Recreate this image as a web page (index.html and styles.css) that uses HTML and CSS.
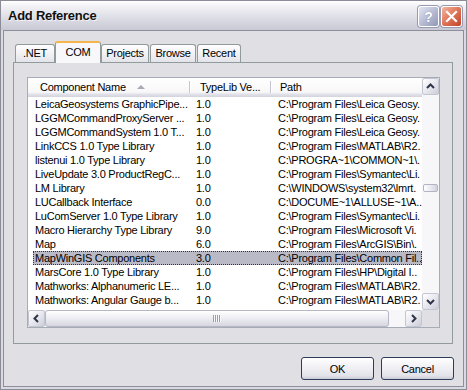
FILE: index.html
```html
<!DOCTYPE html>
<html lang="en">
<head>
    <meta charset="UTF-8">
    <title>Add Reference</title>
    <link rel="stylesheet" href="styles.css">
</head>
<body>
    <div class="window">
        <div class="titlebar">
            <span class="title">Add Reference</span>
            <div class="caption-buttons">
                <span class="cap-btn help">?</span>
                <span class="cap-btn close">
                    <svg width="19" height="19" viewBox="0 0 19 19">
                        <path d="M5 5 L14 14 M14 5 L5 14" stroke="#fff" stroke-width="2.2" stroke-linecap="square"/>
                    </svg>
                </span>
            </div>
        </div>

        <div class="client">
            <div class="tabs">
                <span class="tab tab-net">.NET</span>
                <span class="tab tab-com active">COM</span>
                <span class="tab tab-projects">Projects</span>
                <span class="tab tab-browse">Browse</span>
                <span class="tab tab-recent">Recent</span>
            </div>

            <div class="panel">
                <div class="listview">
                    <div class="lv-main">
                        <div class="lv-header">
                            <div class="hcol c1">Component Name <span class="sort-arrow"></span></div>
                            <div class="hcol c2">TypeLib Ve...</div>
                            <div class="hcol c3">Path</div>
                        </div>
                        <div class="lv-rows">
                            <div class="row"><span class="c1">LeicaGeosystems GraphicPipe...</span><span class="c2">1.0</span><span class="c3">C:\Program Files\Leica Geosy.</span></div>
                            <div class="row"><span class="c1">LGGMCommandProxyServer ...</span><span class="c2">1.0</span><span class="c3">C:\Program Files\Leica Geosy.</span></div>
                            <div class="row"><span class="c1">LGGMCommandSystem 1.0 T...</span><span class="c2">1.0</span><span class="c3">C:\Program Files\Leica Geosy.</span></div>
                            <div class="row"><span class="c1">LinkCCS 1.0 Type Library</span><span class="c2">1.0</span><span class="c3">C:\Program Files\MATLAB\R2.</span></div>
                            <div class="row"><span class="c1">listenui 1.0 Type Library</span><span class="c2">1.0</span><span class="c3">C:\PROGRA~1\COMMON~1\.</span></div>
                            <div class="row"><span class="c1">LiveUpdate 3.0 ProductRegC...</span><span class="c2">1.0</span><span class="c3">C:\Program Files\Symantec\Li.</span></div>
                            <div class="row"><span class="c1">LM Library</span><span class="c2">1.0</span><span class="c3">C:\WINDOWS\system32\lmrt.</span></div>
                            <div class="row"><span class="c1">LUCallback Interface</span><span class="c2">0.0</span><span class="c3">C:\DOCUME~1\ALLUSE~1\A..</span></div>
                            <div class="row"><span class="c1">LuComServer 1.0 Type Library</span><span class="c2">1.0</span><span class="c3">C:\Program Files\Symantec\Li.</span></div>
                            <div class="row"><span class="c1">Macro Hierarchy Type Library</span><span class="c2">9.0</span><span class="c3">C:\Program Files\Microsoft Vi.</span></div>
                            <div class="row"><span class="c1">Map</span><span class="c2">6.0</span><span class="c3">C:\Program Files\ArcGIS\Bin\.</span></div>
                            <div class="row selected"><span class="c1">MapWinGIS Components</span><span class="c2">3.0</span><span class="c3">C:\Program Files\Common Fil..</span></div>
                            <div class="row"><span class="c1">MarsCore 1.0 Type Library</span><span class="c2">1.0</span><span class="c3">C:\Program Files\HP\Digital I..</span></div>
                            <div class="row"><span class="c1">Mathworks: Alphanumeric LE...</span><span class="c2">1.0</span><span class="c3">C:\Program Files\MATLAB\R2.</span></div>
                            <div class="row"><span class="c1">Mathworks: Angular Gauge b...</span><span class="c2">1.0</span><span class="c3">C:\Program Files\MATLAB\R2.</span></div>
                        </div>
                    </div>

                    <div class="vscroll">
                        <span class="sb-btn">
                            <svg width="15" height="15" viewBox="0 0 15 15"><path d="M4 9 L7.5 5.5 L11 9" fill="none" stroke="#2f3448" stroke-width="2"/></svg>
                        </span>
                        <div class="v-track">
                            <span class="v-thumb"></span>
                        </div>
                        <span class="sb-btn">
                            <svg width="15" height="15" viewBox="0 0 15 15"><path d="M4 6 L7.5 9.5 L11 6" fill="none" stroke="#2f3448" stroke-width="2"/></svg>
                        </span>
                    </div>

                    <div class="hscroll">
                        <span class="sb-btn">
                            <svg width="15" height="15" viewBox="0 0 15 15"><path d="M9 4 L5.5 7.5 L9 11" fill="none" stroke="#2f3448" stroke-width="2"/></svg>
                        </span>
                        <div class="h-track">
                            <span class="h-thumb"><span class="grip"></span></span>
                        </div>
                        <span class="sb-btn">
                            <svg width="15" height="15" viewBox="0 0 15 15"><path d="M6 4 L9.5 7.5 L6 11" fill="none" stroke="#2f3448" stroke-width="2"/></svg>
                        </span>
                    </div>

                    <div class="corner"></div>
                </div>
            </div>

            <div class="buttons">
                <button class="btn">OK</button>
                <button class="btn">Cancel</button>
            </div>
        </div>
    </div>
</body>
</html>
```

FILE: styles.css
```css
body {
    margin: 0;
    font-family: 'Liberation Sans', Arial, sans-serif;
    font-size: 11px;
    letter-spacing: -0.25px;
    color: #000;
    background: #e0dfe3;
}
.window {
    width: 467px;
    height: 390px;
    box-sizing: border-box;
    border: 1px solid #8c8c98;
    background: #d9d9e1;
    display: flex;
    flex-direction: column;
    overflow: hidden;
}

/* title bar */
.titlebar {
    height: 29px;
    flex: none;
    display: flex;
    align-items: flex-start;
    justify-content: space-between;
    padding: 0 4px 0 7px;
    background: linear-gradient(#ffffff 0%, #eeeef3 25%, #dcdce5 60%, #c9c9d5 100%);
}
.title {
    font-weight: bold;
    font-size: 13px;
    line-height: 30px;
    color: #111;
    text-shadow: 1px 1px 0 #f4f4f8;
}
.caption-buttons {
    display: flex;
    gap: 2px;
    margin-top: 5px;
}
.cap-btn {
    width: 21px;
    height: 21px;
    box-sizing: border-box;
    border: 1px solid #fff;
    border-radius: 3px;
    box-shadow: 0 0 0 1px #9a9aae;
    display: flex;
    align-items: center;
    justify-content: center;
}
.help {
    background: linear-gradient(135deg, #e2e5f2 0%, #b4b9d2 55%, #9196b5 100%);
    color: #fff;
    font-weight: bold;
    font-size: 14px;
    letter-spacing: 0;
    text-shadow: 0 0 1px #6f7494;
}
.close {
    background: linear-gradient(135deg, #f2b7a2 0%, #df7457 50%, #c2432b 100%);
}

/* client area */
.client {
    flex: 1;
    margin: 0 2px 2px;
    border: 1px solid #8e8e9a;
    background: #e0dfe3;
    display: flex;
    flex-direction: column;
}
.tabs {
    display: flex;
    align-items: flex-end;
    margin: 10px 0 0 11px;
    height: 21px;
}
.tab {
    height: 17px;
    line-height: 17px;
    box-sizing: content-box;
    text-align: center;
    border: 1px solid #919b9c;
    border-bottom: none;
    border-radius: 3px 3px 0 0;
    background: linear-gradient(#ffffff, #f2f2f5 50%, #e3e3ea);
}
.tab-net { width: 38px; }
.tab-com { width: 44px; }
.tab-projects { width: 46px; }
.tab-browse { width: 44px; margin-left: 1px; }
.tab-recent { width: 42px; margin-left: 1px; }
.tab.active {
    height: 20px;
    line-height: 19px;
    margin-bottom: -1px;
    border-top: 2px solid #f4b64a;
    background: #f8f8fa;
    position: relative;
    z-index: 1;
}
.panel {
    margin-left: 9px;
    width: 440px;
    height: 282px;
    box-sizing: border-box;
    border: 1px solid #919b9c;
    background: #e0dfe3;
    padding: 14px 0 0 13px;
}

/* list view */
.listview {
    width: 413px;
    height: 251px;
    box-sizing: border-box;
    border: 1px solid #a5acb5;
    background: #fff;
    display: grid;
    grid-template-columns: 394px 17px;
    grid-template-rows: 232px 17px;
}
.lv-main {
    overflow: hidden;
}
.lv-header {
    height: 19px;
    display: flex;
    background: linear-gradient(#ffffff 0%, #f7f7f9 75%, #e2e2ea 85%, #d3d3dc 100%);
}
.hcol {
    position: relative;
    line-height: 18px;
    white-space: nowrap;
    box-sizing: border-box;
}
.hcol::after {
    content: '';
    position: absolute;
    right: 0;
    top: 3px;
    bottom: 4px;
    width: 1px;
    background: #c6c5cf;
    box-shadow: 1px 0 0 #fff;
}
.hcol.c1 { width: 162px; padding-left: 12px; }
.hcol.c2 { width: 81px; padding-left: 10px; }
.hcol.c3 { flex: 1; padding-left: 9px; }
.hcol.c3::after { display: none; }
.sort-arrow {
    display: inline-block;
    margin-left: 8px;
    vertical-align: 2px;
    border-left: 4px solid transparent;
    border-right: 4px solid transparent;
    border-bottom: 4px solid #a9a8b6;
}
.row {
    display: flex;
    height: 14px;
    line-height: 14px;
    margin-left: 5px;
    white-space: nowrap;
    box-sizing: border-box;
}
.row span {
    box-sizing: border-box;
}
.row .c1 { width: 157px; padding-left: 2px; flex: none; }
.row .c2 { width: 81px; padding-left: 6px; flex: none; }
.row .c3 { flex: 1; padding-left: 7px; }
.row.selected {
    background: #babac6;
    outline: 1px dotted #333;
    outline-offset: -1px;
}

/* scroll bars */
.vscroll {
    display: flex;
    flex-direction: column;
    background: #f7f7f9;
}
.hscroll {
    display: flex;
    background: #f7f7f9;
}
.sb-btn {
    width: 17px;
    height: 17px;
    flex: none;
    box-sizing: border-box;
    border: 1px solid #c4c5d2;
    border-radius: 2px;
    background: linear-gradient(135deg, #ffffff 0%, #e8e8ef 50%, #cdcdd9 100%);
    display: flex;
    align-items: center;
    justify-content: center;
}
.v-track {
    flex: 1;
    padding: 89px 1px 0;
}
.v-thumb {
    display: block;
    height: 8px;
    box-sizing: border-box;
    border: 1px solid #b3b4c3;
    border-radius: 2px;
    background: linear-gradient(90deg, #ffffff, #e6e6ee 60%, #d2d2dc);
}
.h-track {
    flex: 1;
    display: flex;
    padding-right: 16px;
}
.h-thumb {
    flex: 1;
    box-sizing: border-box;
    border: 1px solid #b6b7c5;
    border-radius: 3px;
    background: linear-gradient(#ffffff, #ececf2 50%, #d6d6e0);
    display: flex;
    align-items: center;
    justify-content: center;
}
.grip {
    width: 8px;
    height: 7px;
    background: repeating-linear-gradient(90deg, #9d9eae 0 1px, #f8f8fa 1px 2px);
}
.corner {
    background: #e0dfe3;
}

/* dialog buttons */
.buttons {
    display: flex;
    justify-content: flex-end;
    gap: 7px;
    margin-top: 13px;
    padding-right: 9px;
}
.btn {
    width: 73px;
    height: 23px;
    font-family: inherit;
    font-size: 11px;
    letter-spacing: inherit;
    color: #000;
    border: 1px solid #2e3c58;
    border-radius: 3px;
    background: linear-gradient(#ffffff 0%, #f2f2f6 40%, #e2e2ea 85%, #c9c9d4 100%);
    box-shadow: inset 0 -1px 0 #d0d0da;
    padding: 0;
}
```
